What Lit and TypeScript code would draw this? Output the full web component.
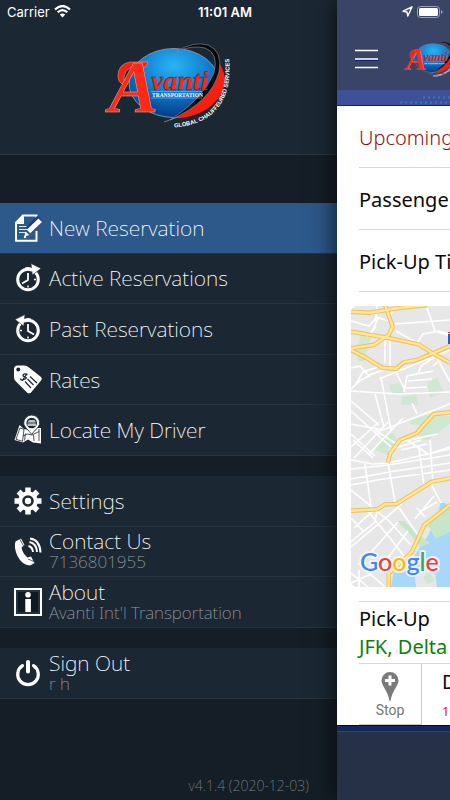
import { LitElement, html, svg, css, nothing } from "lit";
import { customElement } from "lit/decorators.js";
import { classMap } from "lit/directives/class-map.js";

const ink = "#1b2834";

const clock = svg`
  <circle cx="14" cy="15.500" r="10.300" fill="none" stroke="#fff" stroke-width="3"/>
  <path d="M14 9v7l-6 3.500" fill="none" stroke="#fff" stroke-width="1.800"/>
  <path d="M20 15.500h2M14 21.500v2" stroke="#fff" stroke-width="1.500"/>
  <path d="M17-.5 27 4.500 18.300 11z" fill="#fff" stroke=${ink} stroke-width=".6"/>
  <path d="M11 3.500q4-1.500 8 1v3q-4-2-8-1z" fill="#fff"/>`;

const icons = {
  compose: svg`
    <path d="M22.500 17v9.800H2V9l7-7.500h13.500V6" fill="none" stroke="#fff" stroke-width="2"/>
    <path d="M1 10V8.500L8.500 1H10v9z" fill="#fff"/>
    <path d="M5 12.500h12M5 15.500h9M5 18.500h7" stroke="#dfe7f0" stroke-width="1.200"/>
    <path d="M26 4.500 14.500 16" stroke="#1f3f78" stroke-width="7.500"/>
    <path d="M26.200 6.200 14.500 17.500" stroke="#fff" stroke-width="5"/>
    <path d="m11.500 17.500 3.800 3.500-5 1.700z" fill="#fff"/><circle cx="11" cy="23" r="1.200" fill="#fff"/>`,
  active: clock,
  past: svg`<g transform="translate(28 0) scale(-1 1)">${clock}</g>`,
  tag: svg`
    <path d="M0 3Q0 0 3-.5H10q3 0 5 2L27 11q1.800 1.700 0 3.500L17 26.500q-2 1.700-4 0L1.500 15Q0 13.500 0 11.500z" fill="#fff"/>
    <circle cx="4.300" cy="3.500" r="2" fill=${ink}/>
    <path d="M13.500 9Q11 7 9.500 8.500t1.500 2.500-1 2.500-3-1M13 7.500l-5 7.500" fill="none" stroke=${ink} stroke-width="1.300"/>
    <path d="m16 10.500 7 6.500M13.500 13l6 6M11 15.500l6 6.500" stroke=${ink} stroke-width="1.200"/>`,
  locate: svg`
    <path d="m5.500 9-5 15 8.500 2.500 5-3 5 3 8 1V12l-6 0-6 2-5-1z" fill="#fff"/>
    <path d="m6 12-4 11.300 6.500 2 1.500-12zM11.500 17.500l-1 7M19.500 19l.5 6M9 20l4-2 5 1 7-3.500M25 13v12" fill="none" stroke=${ink} stroke-width=".8"/>
    <path d="M17.700-1a8 8 0 0 1 8 8c0 4-5 7-8 11.500C14.700 14 9.700 11 9.700 7a8 8 0 0 1 8-8z" fill="#fff" stroke=${ink} stroke-width=".9"/>
    <circle cx="17.700" cy="7" r="5.300" fill=${ink}/>
    <path d="M13.500 6.500 15 4h5.500L22 6.500V10h-8.500z" fill="#b9c0c7"/><path d="M13 7h9.500" stroke=${ink} stroke-width=".8"/>`,
  gear: svg`
    <g stroke="#fff" stroke-width="5.500">
      <path d="M14 .5v27M.5 14h27M4.500 4.500l19 19M23.500 4.500l-19 19"/></g>
    <circle cx="14" cy="14" r="9.800" fill="#fff"/>
    <circle cx="14" cy="14" r="4.500" fill="#fff" stroke=${ink} stroke-width="2.600"/>`,
  phone: svg`
    <path d="M1.500 4.500 7 1.500 10.500 8 7.500 10.500q1 6 6 10l3.500-1L20.500 26l-4.500 2.500Q8 28 3.500 19-.5 10 1.500 4.500z" fill="#fff"/>
    <path d="m5.500 1.500 4 7.500M14 22l6 2.500" stroke=${ink} stroke-width=".7"/>
    <path d="M14.500 9q4 1 4.500 6M15.500 5q7 1.500 7.500 10M16 1.500q10 1.500 10.500 14" fill="none" stroke="#fff" stroke-width="2"/>`,
  info: svg`
    <rect x="1" y="1" width="26" height="26" fill="#101a25" stroke="#fff" stroke-width="2"/>
    <rect x="3" y="3" width="22" height="22" fill="none" stroke="#4b5661" stroke-width=".8"/>
    <circle cx="14" cy="6.800" r="2.800" fill="#fff"/><rect x="11.300" y="11" width="5.600" height="13" fill="#fff"/>`,
  power: svg`
    <path d="M8.500 6.700a10.300 10.300 0 1 0 11 0" fill="none" stroke="#fff" stroke-width="3.200" stroke-linecap="round"/>
    <path d="M14 3v9.500" stroke="#fff" stroke-width="4" stroke-linecap="round"/>`,
};

type IconName = keyof typeof icons;
interface Entry {
  icon: IconName;
  label: string;
  note?: string;
  current?: boolean;
}

const groups: Entry[][] = [
  [
    { icon: "compose", label: "New Reservation", current: true },
    { icon: "active", label: "Active Reservations" },
    { icon: "past", label: "Past Reservations" },
    { icon: "tag", label: "Rates" },
    { icon: "locate", label: "Locate My Driver" },
  ],
  [
    { icon: "gear", label: "Settings" },
    { icon: "phone", label: "Contact Us", note: "7136801955" },
    { icon: "info", label: "About", note: "Avanti Int'l Transportation" },
  ],
  [{ icon: "power", label: "Sign Out", note: "r h" }],
];

@customElement("avanti-logo")
class AvantiLogo extends LitElement {
  static styles = css`
    :host { display: block; }
    svg { display: block; width: 100%; height: 100%; overflow: visible; }
    .script { font-family: "Liberation Serif", serif; font-style: italic; font-weight: 700; }
    .caps { font-family: "Liberation Serif", serif; font-weight: 700; }
    .ring { font-family: "Liberation Sans", sans-serif; font-weight: 700; }
  `;
  render() {
    return html`<svg viewBox="0 0 160 110" role="img" aria-label="Avanti Transportation">
      <defs>
        <radialGradient id="globe" cx=".5" cy=".25" r=".75">
          <stop offset="0" stop-color="#2bb4f4"/><stop offset=".5" stop-color="#0f7fd0"/><stop offset="1" stop-color="#063a86"/>
        </radialGradient>
        <path id="arc" d="M84 97.500Q120 95 133 70 141 55 139 28"/>
      </defs>
      <ellipse cx="84" cy="53" rx="45" ry="34.500" fill="url(#globe)" stroke="#9aa7b3" stroke-width=".8"/>
      <path d="M127 30Q141 48 130 66 115 88 83 88 110 75 122 55 128 42 127 30z" fill="#f5200f"/>
      <path d="M87 21Q104 11 118 15 133 21 129 42 121 72 80 90 113 69 124 43 129 23 115 18 103 15 87 21z" fill="#05080c" stroke="#8b939b" stroke-width=".6"/>
      <path d="M74 92 88 87" stroke="#8b939b" stroke-width=".8"/>
      <path d="M58 32H40Q28 34 28 46q0 6 4 8l4 1q-2-3-2-6 0-9 8-12h14z" fill="#f5200f" stroke="#d8b5b5" stroke-width=".5"/>
      <text class="script" x="19" y="82" fill="#ff2a16"><tspan font-size="74" stroke="#d8b5b5" stroke-width=".5">A</tspan><tspan x="61" y="60" font-size="28" stroke="#4d0a10" stroke-width=".4">vanti</tspan></text>
      <path d="M61 61.500h51M61 68h51" stroke="#b9cbe6" stroke-width=".5"/>
      <text class="caps" x="62" y="67" font-size="5.500" fill="#fff">TRANSPORTATION</text>
      <text class="ring" font-size="5.800" fill="#fff"><textPath href="#arc">GLOBAL CHAUFFEURED SERVICES</textPath></text>
    </svg>`;
  }
}

@customElement("menu-drawer")
class MenuDrawer extends LitElement {
  static styles = css`
    :host {
      display: flex; flex-direction: column; gap: 20px; background: #151e26;
      font-family: "Noto Sans", "Open Sans", sans-serif; font-weight: 200;
    }
    .brand {
      display: flex; justify-content: center; height: 155px; box-sizing: border-box; margin-bottom: 28px;
      padding-top: 30px; background: #1b2834; border-bottom: 1px solid #293641;
    }
    avanti-logo { width: 160px; height: 110px; margin-left: 3px; }
    .group { display: grid; grid-auto-rows: 1fr; margin: 0; padding: 0; list-style: none; }
    .main { height: 253px; }
    .more { height: 152px; }
    .exit { height: 51px; }
    .item { display: grid; }
    button {
      display: flex; align-items: center; gap: 7px; padding: 0 14px; text-align: left;
      border: 0; border-bottom: 1px solid #263440; background: #1b2834; color: #fff;
      font: inherit; font-size: 21px; line-height: 24px; white-space: nowrap;
    }
    .current { background: #2d588a; }
    svg { flex: none; width: 28px; height: 28px; overflow: visible; }
    .words { display: flex; flex-direction: column; }
    .note { font-size: 17px; line-height: 18px; padding-bottom: 2px; color: #989da2; }
    .version { margin: auto 28px 5px auto; font-size: 14px; line-height: 18px; color: #7d848a; }
  `;
  render() {
    const names = ["main", "more", "exit"];
    return html`
      <header class="brand"><avanti-logo></avanti-logo></header>
      ${groups.map((group, i) => html`<ul class="group ${names[i]}">
        ${group.map((e) => html`<li class="item">
          <button class=${classMap({ current: !!e.current })}>
            <svg viewBox="0 0 28 28" aria-hidden="true">${icons[e.icon]}</svg>
            <span class="words">
              <span>${e.label}</span>
              ${e.note ? html`<span class="note">${e.note}</span>` : nothing}
            </span>
          </button>
        </li>`)}
      </ul>`)}
      <div class="version">v4.1.4 (2020-12-03)</div>`;
  }
}

const highways = [
  "M0 5.700 19 6.700 46 2.300 76-1",
  "M33.700-2 41.700 20.700 37.700 29 22.700 39 0 42.300",
  "M0 25.700 36 31.700 67.700 38.300 82.700 48 99 56.700",
  "M0 44 16 52.300 31 61.700 45 62.700 52.700 56.300 66 54 99 40",
  "M36.700 157 39.300 147.300 49 134 66 127 72.700 119 82.700 108 99 106.300",
  "M0 204.700 26 203.300 34.300 198.300 45.300 198 81 175.700 99 172.300",
  "M99 199 86 209 73.300 219 61 245.700 54.300 252.300 37.700 267.300V281",
];

@customElement("city-map")
class CityMap extends LitElement {
  static styles = css`
    :host { display: block; overflow: hidden; }
    svg { display: block; width: 100%; height: 100%; }
    .word { font-family: "Lato", sans-serif; font-size: 25px; font-weight: 500; }
  `;
  render() {
    return html`<svg viewBox="0 0 99 281" preserveAspectRatio="xMinYMin slice" role="img" aria-label="Map">
      <rect width="99" height="281" fill="#e7e7e7"/>
      <g fill="#cfe8d1">
        <path d="M9 29H21L13 55H6zM38 79 49 77 53 87H41zM51 91 65 88 67 99H50zM76 77 86 72 93 86 79 92zM58 114 80 108 99 110V118L76 134 68 132 72 120 60 118zM31 129 43 127 46 134 39 150 24 144z"/>
      </g>
      <path d="M40 281 43 265 60 255 68 243 78 228 88 206 89 197H94L99 206V281z" fill="#a9d6fb"/>
      <path d="M73 217 99 201V226L84 233 79 222zM46 215H53L66 227 79 237 69 241 58 227z" fill="#c5e6c8"/>
      <path d="M64 272Q72 260 84 267L86 281H65z" fill="#e7e7e7"/><path d="M72 271 78 266 84 275 76 278z" fill="#cfe8d1"/>
      <g fill="none" stroke="#fff" stroke-width="1.600">
        <path d="M0 15 18 20 26 11 37 15 42 3M26 0 24 22 16 31M28 11 20 27M44 18 99 14M76 2 84 25 99 30M52 34 66 37 72 28 88 25 99 28M34 33V57M39 32V60M45 25 66 37M0 62 9 60 18 70 10 74 0 83M5 78 12 66 30 60M18 69 38 62M0 85 47 88 99 86M24 88 33 121M30 71 40 124M0 118 32 124 99 98M28 73 99 44M53 86 56 70 82 65M57 75 81 73M55 82 76 81M67 68 70 60 85 50 99 76M43 62 54 84M82 60 92 52M61 97 66 108M0 105 40 141M0 95 28 119M0 141 28 116M3 152 37 116M18 148 52 112M0 128 24 150M24 124 50 141M50 136 86 128M56 134 77 148 99 141"/>
        <path d="M0 154 22 158 37 157 99 143M2 134 22 152M0 163 37 159 99 149M0 173 44 165 99 157M0 179 26 174 99 164M14 158 20 201M37 157 44 196M68 141 73 180M79 134 82 178M0 184 38 215 60 239M16 204 43 237 53 250M3 222 25 202M0 241 51 198M14 253 47 216M28 264 57 225M44 196 69 232M79 176 90 197M64 213 83 190M69 206 86 196M26 204 24 216 8 229 0 236M38 144 70 134M50 144 76 138M66 202 74 211M0 267 17 281M7 257 34 281M0 277 20 268M8 264V281M0 212 12 225"/>
      </g>
      <g fill="none" stroke-linejoin="round">
        ${highways.map((d) => svg`<path d=${d} stroke="#f0be58" stroke-width="4.400"/>`)}
        ${highways.map((d) => svg`<path d=${d} stroke="#ffe698" stroke-width="2.400"/>`)}
      </g>
      <rect x="97" y="28" width="4" height="10" fill="#1765c8"/><rect x="97" y="26" width="4" height="1" fill="#e33"/>
      <text class="word" x="9" y="265" stroke="#f4f7fb" stroke-opacity=".85" stroke-width="4" stroke-linejoin="round" paint-order="stroke" aria-hidden="true"><tspan fill="#4285f4">G</tspan><tspan fill="#ea4335">o</tspan><tspan fill="#fbbc05">o</tspan><tspan fill="#4285f4">g</tspan><tspan fill="#34a853">l</tspan><tspan fill="#ea4335">e</tspan></text>
    </svg>`;
  }
}

@customElement("trip-page")
class TripPage extends LitElement {
  static styles = css`
    :host {
      display: flex; flex-direction: column; overflow: hidden; background: #263148; color: #0a0a0a;
      font-family: "Noto Sans", "Open Sans", sans-serif; font-size: 20px; line-height: 28px; white-space: nowrap;
    }
    .bar {
      display: flex; align-items: center; gap: 18px; height: 90px; box-sizing: border-box;
      padding: 28px 0 0 18px; background: #3a4466;
    }
    .burger { flex: none; width: 25px; height: 20px; padding: 0; border: 0; background: none; }
    .burger svg { display: block; }
    avanti-logo { flex: none; width: 67px; height: 46px; }
    .band { height: 16px; box-sizing: border-box; background: #3c509b; border-bottom: 1px solid #10206c; }
    .band svg { display: block; width: 100%; height: 15px; }
    .sheet { background: #fff; border-bottom: 1px solid #050b18; padding-left: 22px; }
    .row { display: flex; align-items: center; height: 62px; box-sizing: border-box; border-bottom: 1px solid #d9d9d9; margin: 0; padding-top: 2px; }
    .title { font: inherit; font-weight: 300; color: #8b0f14; }
    city-map { height: 281px; margin: 14px 0 14px -8px; border-radius: 6px 0 0 6px; }
    .stopover { height: 63px; padding-top: 3px; box-sizing: border-box; border-top: 1px solid #d9d9d9; border-bottom: 1px solid #d9d9d9; }
    .place { color: #0a800a; }
    .actions { display: flex; height: 61px; }
    .stop {
      display: flex; flex: none; flex-direction: column; align-items: center; gap: 1px; width: 63px; padding: 8px 0 0; box-sizing: border-box;
      border: 0; border-right: 1px solid #c8c8c8; border-bottom: 1px solid #c8c8c8; background: none; color: #757575;
      font-family: Roboto, sans-serif; font-size: 14px; line-height: 16px;
    }
    .drop { padding: 4px 0 0 20px; }
    .fault { font-size: 13px; line-height: 30px; color: #f01818; }
    .foot { height: 5px; background: #12295a; border-bottom: 1px solid #34466c; }
  `;
  render() {
    return html`
      <header class="bar">
        <button class="burger" aria-label="Menu"><svg width="25" height="20" viewBox="0 0 25 20"><path d="M0 1.500h23M0 10h23M0 18.500h23" stroke="#fff" stroke-width="1.400"/><path d="M0 11.500h23" stroke="#17206a"/></svg></button>
        <avanti-logo></avanti-logo>
      </header>
      <div class="band"><svg viewBox="0 0 113 15" preserveAspectRatio="xMinYMin slice" aria-hidden="true">
        <path d="M86 7.500h27M63 12.500h50" stroke="#3f78ac" stroke-width="2" stroke-dasharray="2 3"/></svg></div>
      <main class="sheet">
        <h1 class="row title">Upcoming</h1>
        <div class="row">Passenger</div>
        <div class="row">Pick-Up Time</div>
        <city-map></city-map>
        <div class="stopover"><div>Pick-Up</div><div class="place">JFK, Delta</div></div>
        <div class="actions">
          <button class="stop">
            <svg width="18" height="29" viewBox="0 0 18 29" aria-hidden="true"><path d="M9 0a8.500 8.500 0 0 1 8.500 8.500C17.500 14 11 19 9.500 29h-1C7 19 .5 14 .5 8.500A8.500 8.500 0 0 1 9 0z" fill="#7b7b7b"/><path d="M9 3.500v10M4 8.500h10" stroke="#fff" stroke-width="3"/></svg>
            Stop</button>
          <div class="drop"><div>Drop-Off</div><div class="fault">1</div></div>
        </div>
      </main>
      <div class="foot"></div>`;
  }
}

@customElement("app-root")
class AppRoot extends LitElement {
  static styles = css`
    :host { display: grid; grid-template-columns: 1fr 113px; min-height: 100vh; position: relative; overflow: hidden; }
    trip-page { position: relative; box-shadow: 0 0 24px rgba(0, 0, 0, 0.8); }
    .status {
      position: absolute; inset: 0 0 auto 0; display: grid; grid-template-columns: 1fr auto 1fr; align-items: center;
      height: 23px; padding: 0 7px 0 7px; color: #fff; font-family: Inter, sans-serif; font-size: 13px; line-height: 16px;
    }
    .left, .right { display: flex; align-items: center; gap: 4px; }
    .right { justify-content: flex-end; }
    .time { font-weight: 600; }
  `;
  render() {
    return html`
      <menu-drawer></menu-drawer>
      <trip-page></trip-page>
      <div class="status">
        <div class="left"><span>Carrier</span>
          <svg width="17" height="13" viewBox="0 0 17 13" role="img" aria-label="Wi-Fi"><path d="M1 4.500Q8.500-2.500 16 4.500M3.700 7.300q4.800-4.400 9.600 0" fill="none" stroke="#fff" stroke-width="2.200"/><path d="M5.800 9.600q2.700-2.200 5.400 0L8.500 12.500z" fill="#fff"/></svg></div>
        <div class="time">11:01 AM</div>
        <div class="right">
          <svg width="11" height="11" viewBox="0 0 11 11" role="img" aria-label="Location"><path d="M10 1 1 5.200l4 .8.800 4z" fill="none" stroke="#fff" stroke-width="1.400" stroke-linejoin="round"/></svg>
          <svg width="26" height="12" viewBox="0 0 26 12" role="img" aria-label="Battery"><rect x=".5" y=".5" width="22" height="11" rx="3" fill="none" stroke="#98a0b5"/><rect x="2" y="2" width="19" height="8" rx="1.500" fill="#fff"/><path d="M24 4q1.600.5 1.600 2T24 8z" fill="#98a0b5"/></svg></div>
      </div>`;
  }
}
